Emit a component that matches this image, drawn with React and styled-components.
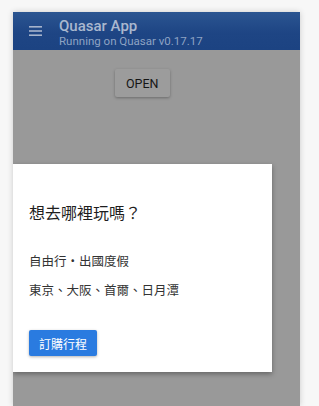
import React from "react";
import styled, { createGlobalStyle } from "styled-components";

const Global = createGlobalStyle`
  html, body {
    margin: 0;
    padding: 0;
    background: #f7f7f7;
    font-family: Roboto, "Noto Sans CJK TC", "Liberation Sans", sans-serif;
    overflow: hidden;
  }
`;

const Frame = styled.div`
  position: relative;
  margin: 12px 0 0 13px;
  width: 287px;
  height: 394px;
  background: #ffffff;
  overflow: hidden;
  box-shadow: 0 0 6px rgba(0, 0, 0, 0.18);
`;

const Header = styled.header`
  display: flex;
  align-items: center;
  gap: 17px;
  height: 38px;
  padding: 0 16px;
  background: linear-gradient(#2b5591, #1e4584 55%, #1c4382);
  box-shadow: 0 1px 3px rgba(0, 0, 0, 0.3);
`;

const Titles = styled.div`
  display: flex;
  flex-direction: column;
  padding-top: 3px;
`;

const AppName = styled.div`
  font-size: 15px;
  line-height: 17px;
  font-weight: 500;
  color: #aab8cf;
`;

const Subtitle = styled.div`
  font-size: 11.5px;
  line-height: 13px;
  color: #8ea3c3;
`;

const Body = styled.main`
  height: 356px;
  padding: 19px 0 0 102px;
  box-sizing: border-box;
  background: #999999;
`;

const Button = styled.button`
  border: none;
  border-radius: 2px;
  font-family: Roboto, "Noto Sans CJK TC", sans-serif;
  font-size: ${(p) => (p.primary ? "12px" : "12.5px")};
  font-weight: 400;
  cursor: pointer;
  background: ${(p) => (p.primary ? "#2a7be0" : "#9c9c9c")};
  color: ${(p) => (p.primary ? "#ffffff" : "#161616")};
  height: ${(p) => (p.primary ? "26px" : "28px")};
  padding: 0 ${(p) => (p.primary ? "10px" : "11px")};
  box-shadow: 0 1px 3px rgba(0, 0, 0, 0.3);
`;

const Overlay = styled.div`
  position: absolute;
  left: 0;
  right: 0;
  top: 152px;
`;

const Dialog = styled.div`
  width: 259px;
  height: 208px;
  padding: 35px 16px 0;
  box-sizing: border-box;
  background: #ffffff;
  box-shadow: 0 2px 5px rgba(0, 0, 0, 0.35);
`;

const DialogTitle = styled.h2`
  margin: 0 0 24px;
  font-size: 16px;
  font-weight: 400;
  line-height: 30px;
  color: #1e1e1e;
`;

const Line = styled.p`
  margin: 0 0 11px;
  font-size: 12.5px;
  line-height: 18px;
  color: #333333;
`;

const Actions = styled.div`
  margin-top: 30px;
`;

const Menu = () => (
  <svg width="13" height="10" viewBox="0 0 13 10">
    <g fill="#a6b4cc">
      <rect x="0" y="0" width="13" height="1.6" />
      <rect x="0" y="4.2" width="13" height="1.6" />
      <rect x="0" y="8.4" width="13" height="1.6" />
    </g>
  </svg>
);

export default function App() {
  return (
    <>
      <Global />
      <Frame>
        <Header>
          <Menu />
          <Titles>
            <AppName>Quasar App</AppName>
            <Subtitle>Running on Quasar v0.17.17</Subtitle>
          </Titles>
        </Header>
        <Body>
          <Button>OPEN</Button>
        </Body>
        <Overlay>
          <Dialog>
            <DialogTitle>想去哪裡玩嗎？</DialogTitle>
            <Line>自由行・出國度假</Line>
            <Line>東京、大阪、首爾、日月潭</Line>
            <Actions>
              <Button primary>訂購行程</Button>
            </Actions>
          </Dialog>
        </Overlay>
      </Frame>
    </>
  );
}
